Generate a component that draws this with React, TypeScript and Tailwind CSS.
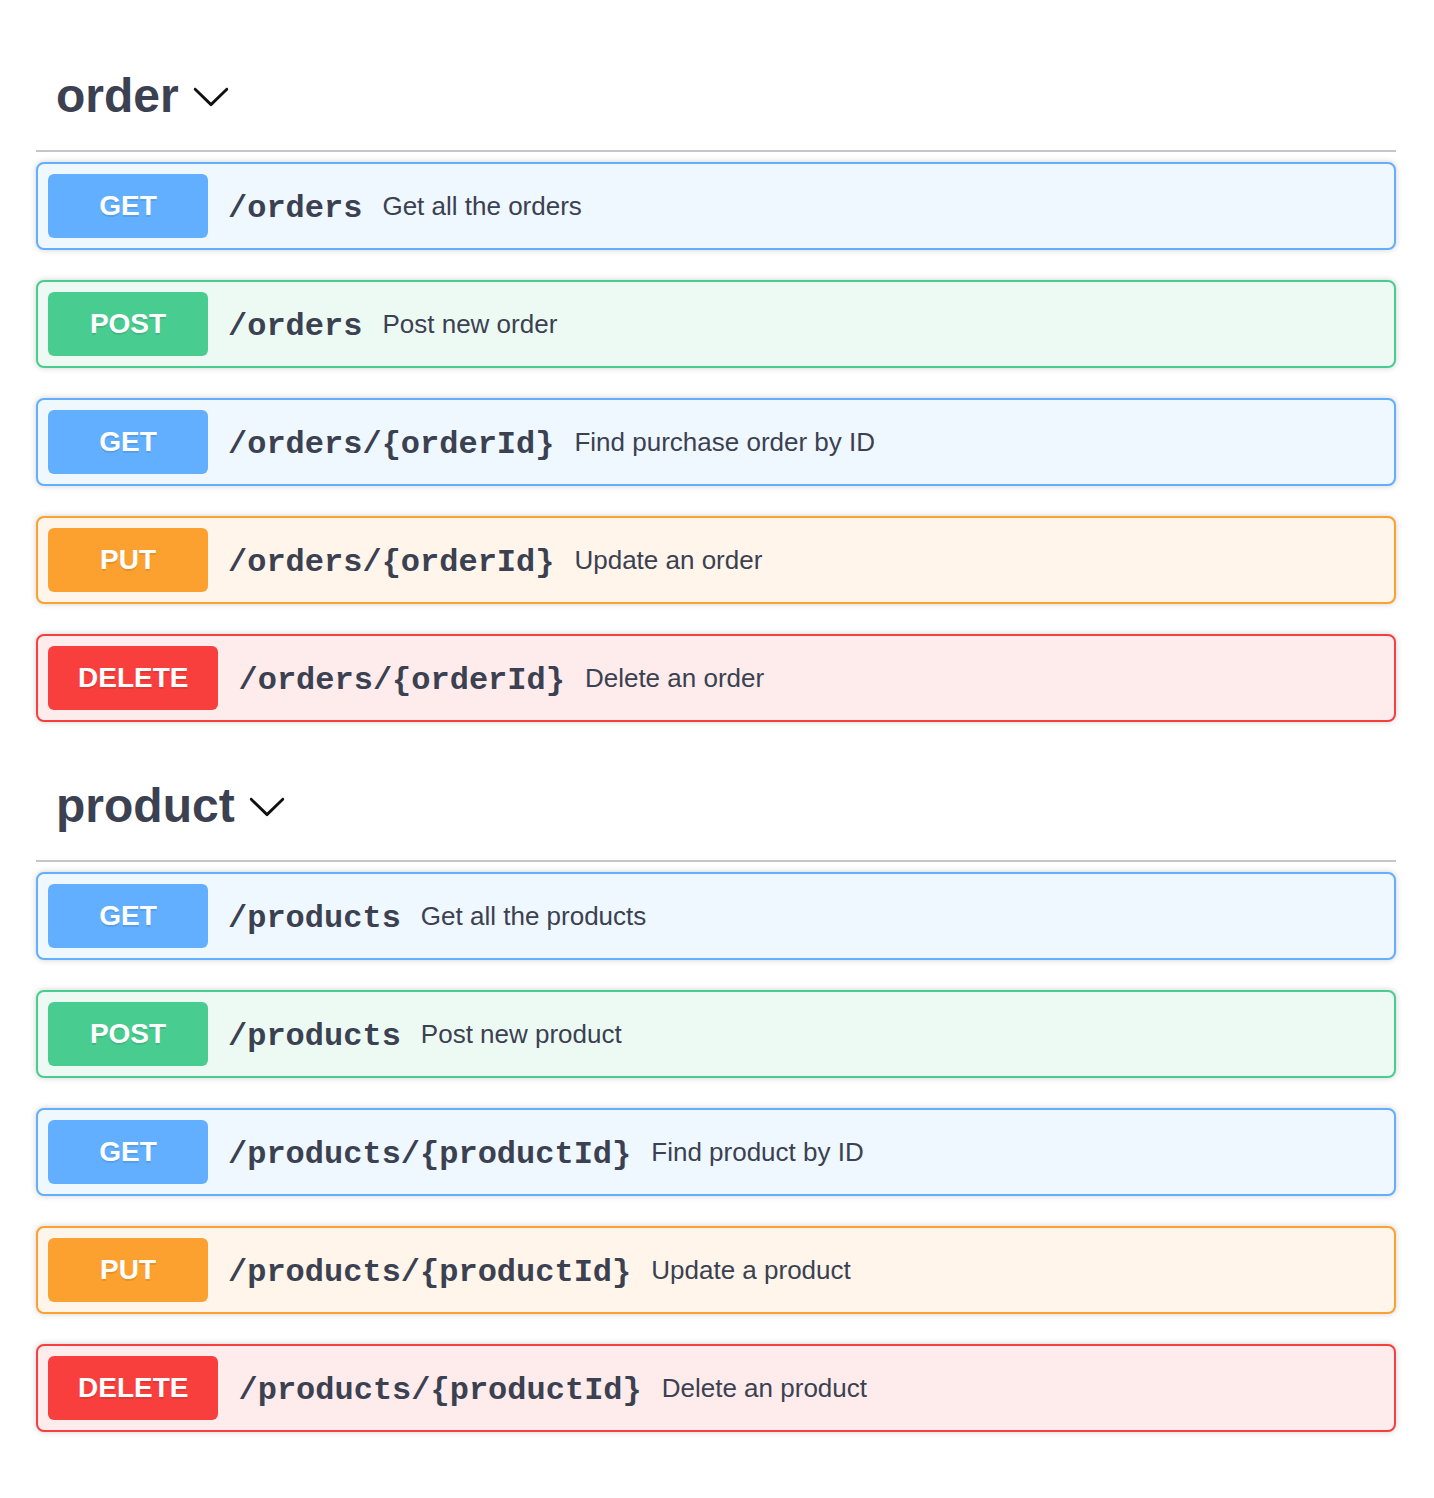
type Method = "GET" | "POST" | "PUT" | "DELETE";

type Operation = {
  method: Method;
  path: string;
  summary: string;
};

type Tag = {
  name: string;
  operations: Operation[];
};

const tags: Tag[] = [
  {
    name: "order",
    operations: [
      { method: "GET", path: "/orders", summary: "Get all the orders" },
      { method: "POST", path: "/orders", summary: "Post new order" },
      { method: "GET", path: "/orders/{orderId}", summary: "Find purchase order by ID" },
      { method: "PUT", path: "/orders/{orderId}", summary: "Update an order" },
      { method: "DELETE", path: "/orders/{orderId}", summary: "Delete an order" },
    ],
  },
  {
    name: "product",
    operations: [
      { method: "GET", path: "/products", summary: "Get all the products" },
      { method: "POST", path: "/products", summary: "Post new product" },
      { method: "GET", path: "/products/{productId}", summary: "Find product by ID" },
      { method: "PUT", path: "/products/{productId}", summary: "Update a product" },
      { method: "DELETE", path: "/products/{productId}", summary: "Delete an product" },
    ],
  },
];

// block + badge colours per method
const styles: Record<Method, { block: string; badge: string }> = {
  GET: { block: "border-[#61affe] bg-[#eff7ff]", badge: "bg-[#61affe]" },
  POST: { block: "border-[#49cc90] bg-[#edfaf4]", badge: "bg-[#49cc90]" },
  PUT: { block: "border-[#fca130] bg-[#fff5ea]", badge: "bg-[#fca130]" },
  DELETE: { block: "border-[#f93e3e] bg-[#feecec]", badge: "bg-[#f93e3e]" },
};

const Chevron = () => (
  <svg width="40" height="40" viewBox="0 0 20 20" className="ml-[12px] fill-[#111]">
    <path d="M17.418 6.109c.272-.268.709-.268.979 0s.271.701 0 .969l-7.908 7.83c-.27.268-.707.268-.979 0l-7.908-7.83c-.27-.268-.27-.701 0-.969.271-.268.709-.268.979 0L10 13.25l7.418-7.141z" />
  </svg>
);

const OperationRow = ({ op }: { op: Operation }) => {
  const s = styles[op.method];
  return (
    <div
      className={`mb-[30px] flex items-center rounded-[8px] border-2 p-[10px] shadow-[0_0_6px_rgba(0,0,0,0.19)] ${s.block}`}
    >
      <span
        className={`flex h-[64px] min-w-[160px] items-center justify-center rounded-[6px] px-[30px] text-[28px] font-bold text-white [text-shadow:0_2px_0_rgba(0,0,0,0.1)] ${s.badge}`}
        style={{ fontFamily: '"Liberation Sans", Arial, sans-serif' }}
      >
        {op.method}
      </span>
      <span
        className="px-[20px] pt-[6px] text-[32px] font-bold text-[#3b4151]"
        style={{ fontFamily: '"Liberation Mono", "Courier New", monospace' }}
      >
        {op.path}
      </span>
      <span
        className="text-[26px] text-[#3b4151]"
        style={{ fontFamily: '"Liberation Sans", Arial, sans-serif' }}
      >
        {op.summary}
      </span>
    </div>
  );
};

export default function App() {
  return (
    <div className="min-h-[1498px] bg-white pt-[42px] pl-[36px] pr-[38px]">
      <div className="w-[1360px]">
        {tags.map((tag) => (
          <section key={tag.name}>
            {/* tag header */}
            <h3
              className="mb-[10px] flex h-[110px] items-center border-b-2 border-[#c4c6cb] pl-[20px] text-[48px] font-bold text-[#3b4151]"
              style={{ fontFamily: '"Liberation Sans", Arial, sans-serif' }}
            >
              {tag.name}
              <Chevron />
            </h3>
            {tag.operations.map((op, i) => (
              <OperationRow key={i} op={op} />
            ))}
          </section>
        ))}
      </div>
    </div>
  );
}
